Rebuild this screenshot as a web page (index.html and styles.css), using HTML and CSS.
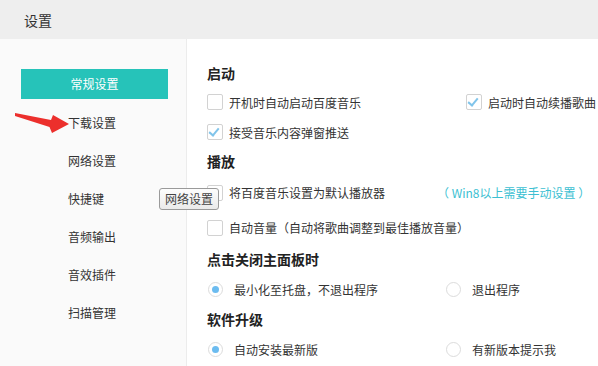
FILE: index.html
```html
<!DOCTYPE html>
<html lang="zh-CN">
  <head>
    <meta charset="UTF-8" />
    <title>设置</title>
    <link rel="stylesheet" href="styles.css">
  </head>
  <body>
    <div class="window">
      <header class="titlebar">设置</header>
      <div class="body">
        <nav class="sidebar">
          <div class="nav-active">常规设置</div>
          <div class="nav-item">下载设置</div>
          <div class="nav-item">网络设置</div>
          <div class="nav-item">快捷键</div>
          <div class="nav-item">音频输出</div>
          <div class="nav-item">音效插件</div>
          <div class="nav-item">扫描管理</div>
        </nav>
        <main class="content">
          <h2 class="heading">启动</h2>
          <div class="row">
            <label class="check col-check"><span class="box"></span>开机时自动启动百度音乐</label>
            <label class="check"><span class="box checked"></span>启动时自动续播歌曲</label>
          </div>
          <div class="row">
            <label class="check"><span class="box checked"></span>接受音乐内容弹窗推送</label>
          </div>

          <h2 class="heading">播放</h2>
          <div class="row tall">
            <label class="check col-note"><span class="box"></span>将百度音乐设置为默认播放器</label>
            <span class="note">（ Win8以上需要手动设置 ）</span>
          </div>
          <div class="row tall">
            <label class="check"><span class="box"></span>自动音量（自动将歌曲调整到最佳播放音量）</label>
          </div>

          <h2 class="heading">点击关闭主面板时</h2>
          <div class="row radio-row">
            <label class="radio col-radio"><span class="dot on"></span>最小化至托盘，不退出程序</label>
            <label class="radio"><span class="dot"></span>退出程序</label>
          </div>

          <h2 class="heading">软件升级</h2>
          <div class="row radio-row">
            <label class="radio col-radio"><span class="dot on"></span>自动安装最新版</label>
            <label class="radio"><span class="dot"></span>有新版本提示我</label>
          </div>
        </main>
      </div>

      <!-- annotation arrow and hover tooltip sit over the page -->
      <svg class="arrow" width="80" height="40" viewBox="0 0 80 40">
        <polygon points="5,8 41,15 43,10 59,19 42,28 39.5,22 5,11" fill="#ec2f2c" />
      </svg>
      <div class="tooltip">网络设置</div>
    </div>
  </body>
</html>
```

FILE: styles.css
```css
body {
  margin: 0;
  background: #fff;
  color: #333;
  font-family: "Noto Sans CJK SC", "Liberation Sans", sans-serif;
  font-size: 12px;
  text-spacing-trim: space-all;
}
.window {
  position: relative;
  width: 598px;
  height: 366px;
  overflow: hidden;
}
.titlebar {
  height: 39px;
  line-height: 40px;
  padding-left: 24px;
  font-size: 14px;
  background: #eeeeee;
  color: #333;
}
.body {
  display: flex;
  height: 327px;
}
.sidebar {
  width: 187px;
  flex: none;
  background: #fafafa;
  border-right: 1px solid #ececec;
  padding-top: 30px;
  box-sizing: border-box;
}
.nav-active {
  margin-left: 21px;
  width: 147px;
  height: 30px;
  line-height: 30px;
  margin-bottom: 5px;
  text-align: center;
  background: #26c3b9;
  color: #fff;
}
.nav-item {
  height: 38px;
  line-height: 38px;
  padding-left: 68px;
}
.content {
  flex: 1;
  padding: 20px 0 0 20px;
}
.heading {
  margin: 0;
  height: 28px;
  line-height: 28px;
  font-size: 14px;
  font-weight: bold;
  color: #222;
}
.row {
  display: flex;
  align-items: center;
  height: 30px;
}
.row.tall {
  height: 35px;
}
.row.radio-row {
  height: 32px;
}
.check,
.radio {
  display: flex;
  align-items: center;
  white-space: nowrap;
}
.col-check {
  width: 259px;
}
.col-note {
  width: 230px;
}
.col-radio {
  width: 238px;
}
.box {
  position: relative;
  width: 14px;
  height: 14px;
  border: 1px solid #d2d2d2;
  border-radius: 2px;
  background: #fff;
  margin-right: 6px;
  flex: none;
}
.box.checked::after {
  content: "";
  position: absolute;
  left: 3px;
  top: 1px;
  width: 4px;
  height: 8px;
  border-right: 2px solid #80c4ea;
  border-bottom: 2px solid #80c4ea;
  transform: rotate(40deg);
}
.dot {
  position: relative;
  width: 13px;
  height: 13px;
  border: 1px solid #dcdcdc;
  border-radius: 50%;
  background: #fff;
  margin: 0 11px 0 1px;
  flex: none;
}
.dot.on::after {
  content: "";
  position: absolute;
  left: 3px;
  top: 3px;
  width: 7px;
  height: 7px;
  border-radius: 50%;
  background: #6cbcf0;
}
.note {
  color: #3cbfd2;
  white-space: pre;
}
.arrow {
  position: absolute;
  left: 10px;
  top: 105px;
}
.tooltip {
  position: absolute;
  left: 159px;
  top: 188px;
  width: 58px;
  height: 20px;
  line-height: 20px;
  text-align: center;
  border: 1px solid #9a9a9a;
  border-radius: 3px;
  background: linear-gradient(#fdfdfd, #eaeaea);
  color: #444;
}
```
